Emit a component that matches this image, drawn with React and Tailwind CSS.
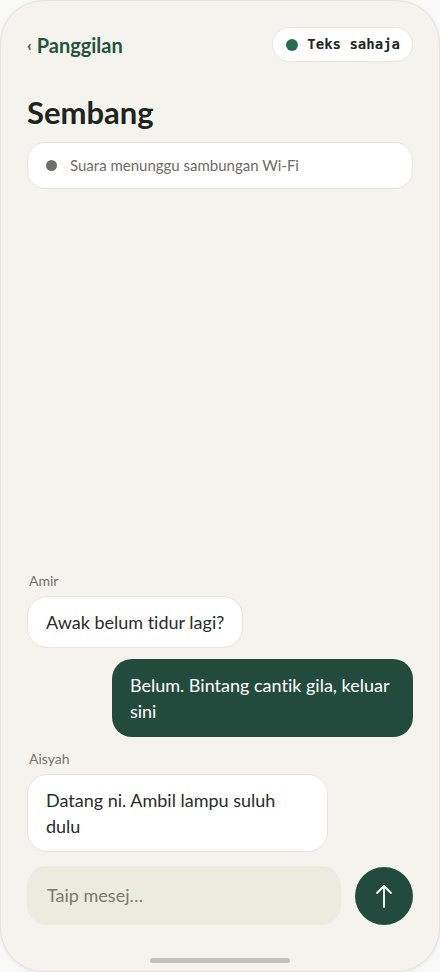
import React from "react";

const sans = { fontFamily: "Lato, 'Noto Sans', sans-serif" };

function Bubble({ children, mine }) {
  return (
    <div
      className={
        mine
          ? "self-end max-w-[78%] rounded-[20px] bg-[#234b3d] px-[18px] py-[13px] text-[18px] leading-[26px] text-white"
          : "self-start max-w-[78%] rounded-[20px] border border-[#e6e3d8] bg-white px-[18px] py-[12px] text-[18px] leading-[26px] text-[#2a2d2a]"
      }
    >
      {children}
    </div>
  );
}

export default function App() {
  return (
    <div className="h-[972px] w-[440px] bg-[#f9f9f8] [font-variant-ligatures:none]" style={sans}>
      <div className="flex h-[972px] w-[440px] flex-col overflow-hidden rounded-[44px] border border-[#e4e3de] bg-[#f4f3ee] px-[26px] shadow-[0_1px_4px_rgba(0,0,0,0.08)]">
        <div className="mt-[26px] flex h-[35px] items-center justify-between">
          <div className="flex items-center gap-[5px] text-[20px] font-bold text-[#24543f]">
            <span className="text-[16px] font-bold">‹</span>
            <span>Panggilan</span>
          </div>
          <div className="flex h-[35px] items-center gap-[9px] rounded-full border border-[#e5e3da] bg-white pl-[13px] pr-[12px]">
            <span className="h-[12px] w-[12px] rounded-full bg-[#2b6b50]"></span>
            <span
              className="text-[14px] font-bold text-[#232623]"
              style={{ fontFamily: "'DejaVu Sans Mono', monospace" }}
            >
              Teks sahaja
            </span>
          </div>
        </div>

        <h1 className="mt-[31px] text-[31px] font-bold leading-[38px] text-[#1e2420]">Sembang</h1>

        <div className="mt-[11px] flex h-[47px] items-center gap-[13px] rounded-[18px] border border-[#e5e3da] bg-white px-[18px]">
          <span className="h-[11px] w-[11px] rounded-full bg-[#6f6d66]"></span>
          <span className="text-[15px] text-[#6e6c66]">Suara menunggu sambungan Wi-Fi</span>
        </div>

        <div className="flex flex-1 flex-col justify-end">
          <div className="flex flex-col">
            <div className="mb-[6px] ml-[2px] text-[14px] leading-[18px] text-[#76746d]">Amir</div>
            <Bubble>Awak belum tidur lagi?</Bubble>
            <div className="h-[11px]"></div>
            <Bubble mine>Belum. Bintang cantik gila, keluar sini</Bubble>
            <div className="mb-[6px] ml-[2px] mt-[13px] text-[14px] leading-[18px] text-[#76746d]">Aisyah</div>
            <Bubble>Datang ni. Ambil lampu suluh dulu</Bubble>
          </div>
        </div>

        <div className="mt-[14px] flex items-center gap-[14px]">
          <div className="flex h-[59px] flex-1 items-center rounded-[20px] bg-[#ecebe0] px-[20px] text-[18px] text-[#7b7970]">
            Taip mesej…
          </div>
          <button className="flex h-[58px] w-[58px] items-center justify-center rounded-full bg-[#234b3d]">
            <svg width="22" height="26" viewBox="0 0 22 26" fill="none" stroke="white" strokeWidth="1.8" strokeLinecap="round" strokeLinejoin="round">
              <path d="M11 24V3" />
              <path d="M4 10l7-7 7 7" />
            </svg>
          </button>
        </div>

        <div className="mb-[8px] mt-[33px] flex justify-center">
          <div className="h-[5px] w-[140px] rounded-full bg-[#c2c1bb]"></div>
        </div>
      </div>
    </div>
  );
}
